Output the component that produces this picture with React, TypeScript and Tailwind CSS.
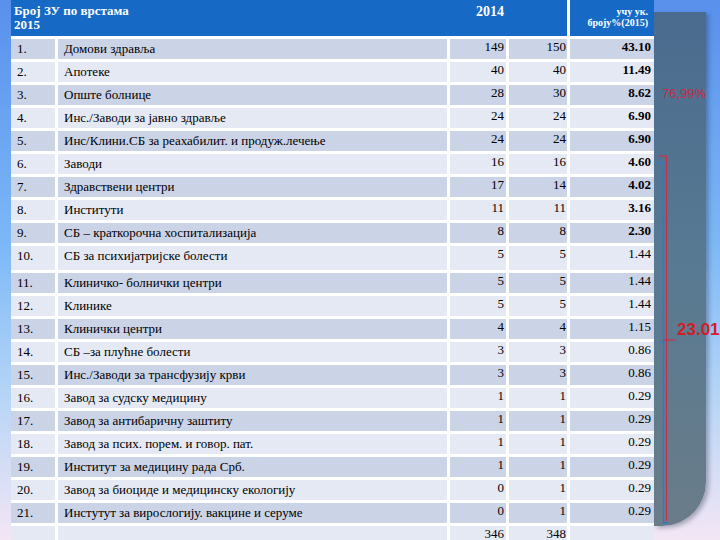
const rows = [
  { n: "1.", name: "Домови здравља", a: "149", b: "150", p: "43.10", bold: true },
  { n: "2.", name: "Апотеке", a: "40", b: "40", p: "11.49", bold: true },
  { n: "3.", name: "Опште болнице", a: "28", b: "30", p: "8.62", bold: true },
  { n: "4.", name: "Инс./Заводи за јавно здравље", a: "24", b: "24", p: "6.90", bold: true },
  { n: "5.", name: "Инс/Клини.СБ за реахабилит. и продуж.лечење", a: "24", b: "24", p: "6.90", bold: true },
  { n: "6.", name: "Заводи", a: "16", b: "16", p: "4.60", bold: true },
  { n: "7.", name: "Здравствени центри", a: "17", b: "14", p: "4.02", bold: true },
  { n: "8.", name: "Институти", a: "11", b: "11", p: "3.16", bold: true },
  { n: "9.", name: "СБ – краткорочна хоспитализација", a: "8", b: "8", p: "2.30", bold: true },
  { n: "10.", name: "СБ за психијатријске болести", a: "5", b: "5", p: "1.44", tall: true },
  { n: "11.", name: "Клиничко- болнички центри", a: "5", b: "5", p: "1.44" },
  { n: "12.", name: "Клинике", a: "5", b: "5", p: "1.44" },
  { n: "13.", name: "Клинички центри", a: "4", b: "4", p: "1.15" },
  { n: "14.", name: "СБ –за плућне болести", a: "3", b: "3", p: "0.86" },
  { n: "15.", name: "Инс./Заводи за трансфузију крви", a: "3", b: "3", p: "0.86" },
  { n: "16.", name: "Завод за судску медицину", a: "1", b: "1", p: "0.29" },
  { n: "17.", name: "Завод за антибаричну заштиту", a: "1", b: "1", p: "0.29" },
  { n: "18.", name: "Завод за псих. порем. и говор. пат.", a: "1", b: "1", p: "0.29" },
  { n: "19.", name: "Институт за медицину рада Срб.", a: "1", b: "1", p: "0.29" },
  { n: "20.", name: "Завод за биоциде и медицинску екологију", a: "0", b: "1", p: "0.29" },
  { n: "21.", name: "Инстутут за вирослогију. вакцине и серуме", a: "0", b: "1", p: "0.29" },
];

export default function App() {
  return (
    <div className="flex h-[540px] w-[720px] overflow-hidden bg-[linear-gradient(180deg,#5890ec_0%,#7cb8f7_45%,#b3d4f6_72%,#f3e6f5_100%)] font-['Liberation_Serif',serif] text-[13px] text-black">
      <div className="w-[11px] shrink-0" />

      {/* Table */}
      <div className="flex w-[643px] shrink-0 flex-col gap-[3px] bg-white">
        {/* Header */}
        <div className="flex h-[36px] shrink-0 gap-[3px]">
          <div className="flex w-[556px] bg-[#1669c4] text-white">
            <div className="w-[402px] pl-[3px] pt-[4px] text-[13px] font-bold leading-[14px]">
              <div>Број ЗУ по врстама</div>
              <div>2015</div>
            </div>
            <div className="flex-1 pt-[4px] text-center text-[14px] font-bold leading-[16px]">2014</div>
          </div>
          <div className="flex-1 bg-[#1669c4] pr-[6px] pt-[6px] text-right text-[10px] font-bold leading-[11px] text-white">
            <div>учу ук.</div>
            <div>бројy%(2015)</div>
          </div>
        </div>

        {/* Rows */}
        {rows.map((r, i) => {
          const bg = i % 2 === 0 ? "bg-[#cbd3e7]" : "bg-[#e5e9f4]";
          return (
            <div key={r.n} className={`grid shrink-0 grid-cols-[44px_389px_56px_58px_84px] gap-x-[3px] ${r.tall ? "h-[24px]" : "h-[20px]"}`}>
              <div className={`${bg} pl-[6px] leading-[20px]`}>{r.n}</div>
              <div className={`${bg} whitespace-nowrap pl-[6px] leading-[20px]`}>{r.name}</div>
              <div className={`${bg} pr-[2px] text-right leading-[15px]`}>{r.a}</div>
              <div className={`${bg} pr-[1px] text-right leading-[15px]`}>{r.b}</div>
              <div className={`${bg} pr-[3px] text-right leading-[15px] ${r.bold ? "font-bold" : ""}`}>{r.p}</div>
            </div>
          );
        })}

        {/* Totals */}
        <div className="grid h-[20px] shrink-0 grid-cols-[44px_389px_56px_58px_84px] gap-x-[3px]">
          <div className="bg-[#e5e9f4]" />
          <div className="bg-[#e5e9f4]" />
          <div className="bg-[#e5e9f4] pr-[2px] text-right leading-[15px]">346</div>
          <div className="bg-[#e5e9f4] pr-[1px] text-right leading-[15px]">348</div>
          <div className="bg-[#e5e9f4]" />
        </div>
      </div>

      {/* Right side panel with annotations */}
      <div className="relative flex-1">
        <div className="mt-[12px] h-[514px] w-[52px] rounded-br-[44px] bg-[linear-gradient(180deg,#4a6b8e_0%,#587a92_50%,#6a7c89_100%)] shadow-[3px_2px_4px_rgba(40,50,70,0.35)]" />
        <svg className="absolute inset-0" width="66" height="540" viewBox="0 0 66 540">
          <path d="M4 163 H9.5 V523 H14" fill="none" stroke="#2f78cc" strokeWidth="1.4" />
          <path d="M6 342 H9.5" fill="none" stroke="#2f78cc" strokeWidth="1.4" />
          <path d="M4 156 H12.5 V521" fill="none" stroke="#c8304a" strokeWidth="1.2" />
          <path d="M9 340 H22" fill="none" stroke="#c8304a" strokeWidth="1.2" />
        </svg>
        <div className="absolute left-[8px] top-[86px] whitespace-nowrap font-['Liberation_Sans',sans-serif] text-[13px] leading-[16px] text-[#c42a48]">
          76,99%
        </div>
        <div className="absolute left-[23px] top-[320px] whitespace-nowrap font-['Liberation_Sans',sans-serif] text-[17px] font-bold leading-[20px] text-[#d41c28]">
          23.01
        </div>
      </div>
    </div>
  );
}
